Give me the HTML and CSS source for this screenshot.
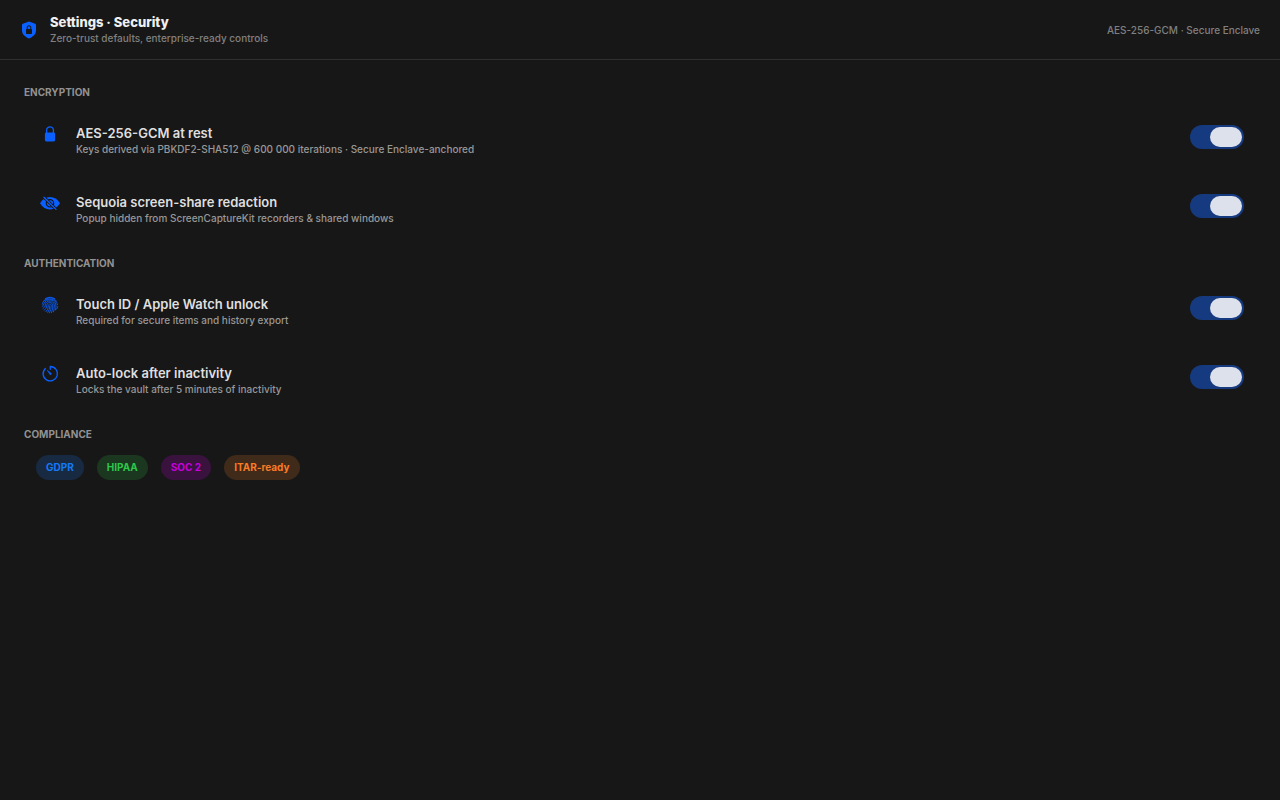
FILE: index.html
```html
<!DOCTYPE html>
<html lang="en">
<head>
<meta charset="utf-8">
<meta name="viewport" content="width=device-width, initial-scale=1">
<title>Settings · Security</title>
<link rel="stylesheet" href="styles.css">
</head>
<body>
<header class="topbar">
  <svg class="shield" viewBox="0 0 18 18" aria-hidden="true">
    <path fill="currentColor" fill-rule="evenodd" d="M9 .5 15.200 2.800Q16 3.100 16 4V9.500C16 13.500 12.500 16 9 17.500 5.500 16 2 13.500 2 9.500V4Q2 3.100 2.800 2.800ZM6.700 8Q6 8 6 8.700V12.300Q6 13 6.700 13H11.300Q12 13 12 12.300V8.700Q12 8 11.300 8V6.800C11.300 3.400 6.700 3.400 6.700 6.800ZM7.700 8V6.800C7.700 4.700 10.300 4.700 10.300 6.800V8Z"/>
  </svg>
  <div class="heading">
    <h1 class="page-title">Settings · Security</h1>
    <p class="detail">Zero-trust defaults, enterprise-ready controls</p>
  </div>
  <p class="detail">AES-256-GCM · Secure Enclave</p>
</header>
<main class="content">
  <section>
    <h2 class="section-title">ENCRYPTION</h2>
    <div class="row">
      <svg class="icon" viewBox="0 0 20 18" aria-hidden="true">
        <rect x="4.900" y="7.500" width="10.200" height="9" rx="1.400" fill="currentColor"/>
        <path d="M6.600 8V5.200C6.600.8 13.400.8 13.400 5.200V8" fill="none" stroke="currentColor" stroke-width="1.300"/>
      </svg>
      <label class="text" for="rest"><span class="name">AES-256-GCM at rest</span><span class="detail">Keys derived via PBKDF2-SHA512 @ 600 000 iterations · Secure Enclave-anchored</span></label>
      <input class="switch" type="checkbox" role="switch" id="rest" checked>
    </div>
    <div class="row">
      <svg class="icon" viewBox="0 0 20 18" aria-hidden="true">
        <path d="M0 9.300C2.500 5 6 3 10 3S17.500 5 20 9.300C17.500 13.500 14 15.500 10 15.500S2.500 13.500 0 9.300Z" fill="currentColor"/>
        <circle cx="10" cy="9.300" r="3.700" fill="none" stroke="#171717" stroke-width="1.200"/>
        <path d="M4 3.200 16 15.400" stroke="#171717" stroke-width="3"/>
        <path d="M4 3.200 16 15.400" stroke="currentColor" stroke-width="1.300" stroke-linecap="round"/>
      </svg>
      <label class="text" for="redact"><span class="name">Sequoia screen-share redaction</span><span class="detail">Popup hidden from ScreenCaptureKit recorders &amp; shared windows</span></label>
      <input class="switch" type="checkbox" role="switch" id="redact" checked>
    </div>
  </section>
  <section>
    <h2 class="section-title">AUTHENTICATION</h2>
    <div class="row">
      <svg class="icon" viewBox="0 0 20 18" aria-hidden="true">
        <g fill="none" stroke="currentColor" stroke-width=".85" stroke-linecap="round">
          <path d="M5.300 2.600Q10-.3 14.700 2.600M3.500 5.200C6.500.6 13.500.6 16.500 5.200M2.300 8.200C3 1.500 15.500.5 17.500 8.700M2.200 10.500Q4 9.500 4 7.500C6 2.500 14 2.500 15.800 8Q16.300 11 15.500 14M3 12.500Q5.500 11 5.400 8.800C5.500 3.700 14 3.700 14.300 9Q14.600 12.500 13.500 15.800M4.300 14.300Q7 12.300 6.900 9C7 5.700 12.600 5.700 12.800 9Q13 13.500 11.500 16.700M6 15.700Q8.500 13.500 8.400 9.500C8.500 7.500 11.200 7.500 11.300 9.500Q11.300 13.500 9.500 16.900M9.900 9.600Q10 13.500 7.800 16.500M17.600 10.500Q17.400 12 16.800 13"/>
        </g>
      </svg>
      <label class="text" for="unlock"><span class="name">Touch ID / Apple Watch unlock</span><span class="detail">Required for secure items and history export</span></label>
      <input class="switch" type="checkbox" role="switch" id="unlock" checked>
    </div>
    <div class="row">
      <svg class="icon" viewBox="0 0 20 18" aria-hidden="true">
        <path d="M10.300 4.300V1.500A7.200 7.200 0 1 1 5.400 3.400" fill="none" stroke="currentColor" stroke-width="1.300" stroke-linecap="round" stroke-linejoin="round"/>
        <path d="M7 5 11.200 8.200Q11.700 9 11.100 9.500 10.400 10 9.800 9.400Z" fill="currentColor" stroke="currentColor" stroke-width=".4"/>
      </svg>
      <label class="text" for="autolock"><span class="name">Auto-lock after inactivity</span><span class="detail">Locks the vault after 5 minutes of inactivity</span></label>
      <input class="switch" type="checkbox" role="switch" id="autolock" checked>
    </div>
  </section>
  <section>
    <h2 class="section-title">COMPLIANCE</h2>
    <ul class="chips">
      <li class="chip blue">GDPR</li>
      <li class="chip green">HIPAA</li>
      <li class="chip purple">SOC 2</li>
      <li class="chip orange">ITAR-ready</li>
    </ul>
  </section>
</main>
</body>
</html>
```
FILE: styles.css
```css
* {
  box-sizing: border-box;
  margin: 0;
  padding: 0;
}

body {
  background: #171717;
  color: #dfdfdf;
  font-family: Inter, "Liberation Sans", sans-serif;
}

.topbar {
  display: flex;
  align-items: center;
  gap: 12px;
  padding: 14px 20px;
  border-bottom: 1px solid #303030;
}

.shield {
  width: 18px;
  height: 18px;
  color: #0a60ff;
}

.heading {
  flex: 1;
}

.page-title {
  font-size: 13px;
  line-height: 17px;
  font-weight: 800;
  color: #f0f0f0;
}

.detail {
  font-size: 10px;
  line-height: 14px;
  font-weight: 500;
  color: #808080;
}

.content {
  display: flex;
  flex-direction: column;
  gap: 13px;
  padding: 26px 24px;
}

.section-title {
  margin-bottom: 7px;
  font-size: 10px;
  line-height: 13px;
  font-weight: 700;
  color: #929292;
}

.row {
  display: flex;
  align-items: flex-start;
  gap: 16px;
  padding: 19px 12px 19px 16px;
}

.icon {
  flex: none;
  width: 20px;
  height: 18px;
  color: #0a60ff;
}

.text {
  display: flex;
  flex: 1;
  flex-direction: column;
}

.name {
  font-size: 13px;
  line-height: 17px;
  font-weight: 600;
}

.text .detail {
  color: #989898;
}

.switch {
  appearance: none;
  display: flex;
  flex: none;
  width: 54px;
  height: 24px;
  padding: 2px;
  border-radius: 12px;
  background: #4a4a4a;
}

.switch::before {
  content: "";
  width: 32px;
  height: 20px;
  border-radius: 10px;
  background: #dce1ec;
}

.switch:checked {
  justify-content: flex-end;
  background: #163a7f;
}

.chips {
  display: flex;
  flex-wrap: wrap;
  gap: 13px;
  padding: 7px 12px;
  list-style: none;
}

.chip {
  padding: 6px 10px;
  border-radius: 13px;
  font-size: 10px;
  line-height: 13px;
  font-weight: 700;
}

.blue {
  background: #172a42;
  color: #1479f5;
}

.green {
  background: #1b371f;
  color: #2dc84b;
}

.purple {
  background: #39123d;
  color: #c400df;
}

.orange {
  background: #402a19;
  color: #f97b26;
}
```
